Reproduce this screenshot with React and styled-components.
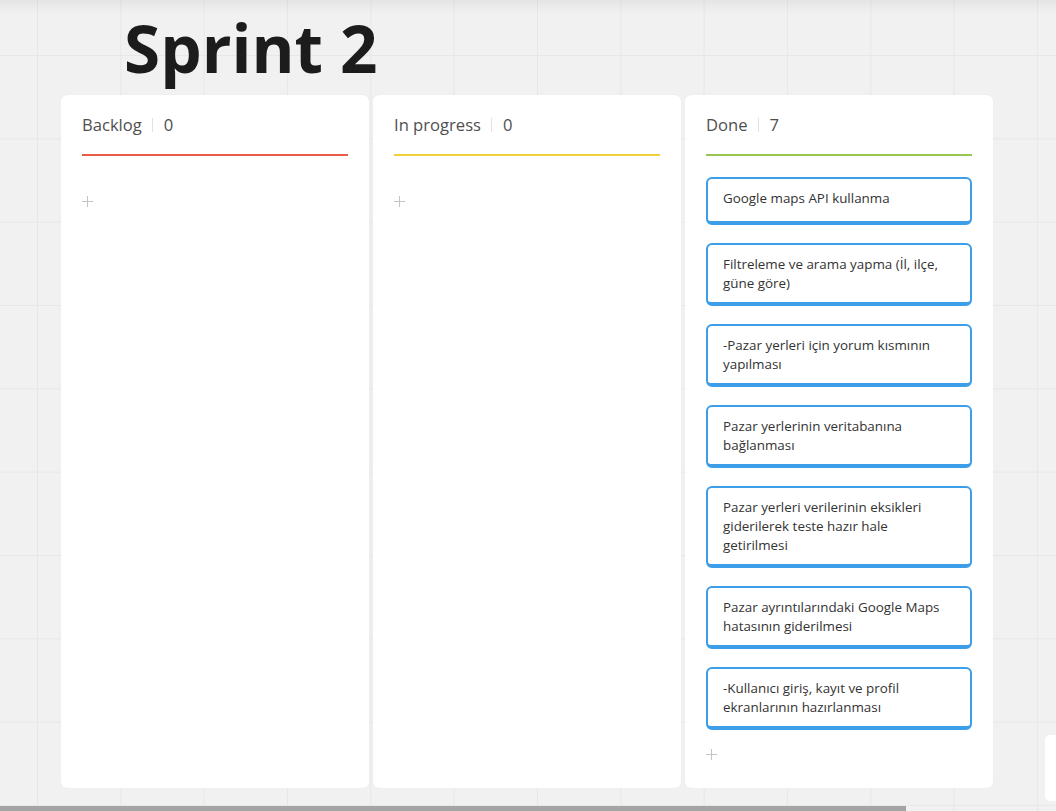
import React from 'react'
import styled, {createGlobalStyle} from 'styled-components'

const GlobalStyle = createGlobalStyle`
  html, body {
    margin: 0;
    padding: 0;
  }
  body {
    font-family: 'Open Sans', 'Noto Sans', sans-serif;
    background-color: #f1f1f1;
    background-image:
      linear-gradient(180deg, rgba(0, 0, 0, 0.05) 0px, rgba(0, 0, 0, 0) 14px),
      linear-gradient(90deg, #e7e7e7 1px, transparent 1px),
      linear-gradient(180deg, #e7e7e7 1px, transparent 1px);
    background-size: 100% 100%, 83.33px 83.33px, 83.33px 83.33px;
    background-position: 0 0, 37px 0, 0 55px;
    background-repeat: no-repeat, repeat, repeat;
    overflow: hidden;
  }
`

const Page = styled.div`
  position: relative;
  width: 1056px;
  height: 811px;
  overflow: hidden;
`

const Title = styled.h1`
  margin: 0;
  padding: 15px 0 0 124px;
  height: 95px;
  box-sizing: border-box;
  font-size: 65.6px;
  line-height: 66px;
  font-weight: 700;
  color: #1c1c1c;
`

const Board = styled.div`
  display: flex;
  gap: 4px;
  padding-left: 61px;
`

const Column = styled.section`
  width: 308px;
  height: 693px;
  box-sizing: border-box;
  padding: 0 21px;
  background: #fff;
  border-radius: 6px;
  box-shadow: 0 0 1px rgba(0, 0, 0, 0.08);
`

const Header = styled.header`
  display: flex;
  align-items: center;
  padding: 19px 0 18px;
  font-size: 16.6px;
  line-height: 22px;
  color: #4f4f4f;
  border-bottom: 2px solid ${p => p.accent};
`

const Divider = styled.span`
  width: 1px;
  height: 14px;
  margin: 0 11px 0 10px;
  background: #e2e2e2;
`

const List = styled.div`
  display: flex;
  flex-direction: column;
  gap: 18px;
  padding-top: 21px;
`

const Card = styled.div`
  box-sizing: border-box;
  min-height: 48px;
  padding: 9.5px 17px 9.5px 15px;
  border: 2px solid #3c9de9;
  border-bottom-width: 4px;
  border-radius: 6px;
  font-size: 13.4px;
  line-height: 19px;
  color: #333;
`

const Plus = styled.div`
  margin-top: 17px;
  width: 12px;
  height: 14px;
  display: flex;
  align-items: center;
`

const Scrollbar = styled.div`
  position: absolute;
  left: 0;
  bottom: 0;
  width: 906px;
  height: 5px;
  background: #a4a4a4;
`

const EdgeCard = styled.div`
  position: absolute;
  left: 1045px;
  top: 735px;
  width: 30px;
  height: 66px;
  background: #fff;
  border-radius: 5px;
`

const columns = [
  {title: 'Backlog', accent: '#e85b44', cards: []},
  {title: 'In progress', accent: '#f1d13a', cards: []},
  {
    title: 'Done',
    accent: '#97c653',
    cards: [
      'Google maps API kullanma',
      'Filtreleme ve arama yapma (İl, ilçe, güne göre)',
      '-Pazar yerleri için yorum kısmının yapılması',
      'Pazar yerlerinin veritabanına bağlanması',
      'Pazar yerleri verilerinin eksikleri giderilerek teste hazır hale getirilmesi',
      'Pazar ayrıntılarındaki Google Maps hatasının giderilmesi',
      '-Kullanıcı giriş, kayıt ve profil ekranlarının hazırlanması'
    ]
  }
]

const PlusIcon = () => (
  <svg width='11' height='11' viewBox='0 0 11 11'>
    <path d='M5.5 0V11M0 5.5H11' stroke='#c4c4c4' strokeWidth='1' />
  </svg>
)

export default function App () {
  return (
    <Page>
      <GlobalStyle />
      <Title>Sprint 2</Title>
      <Board>
        {columns.map(col => (
          <Column key={col.title}>
            <Header accent={col.accent}>
              {col.title}
              <Divider />
              {col.cards.length}
            </Header>
            <List>
              {col.cards.map(text => (
                <Card key={text}>{text}</Card>
              ))}
            </List>
            <Plus>
              <PlusIcon />
            </Plus>
          </Column>
        ))}
      </Board>
      <EdgeCard />
      <Scrollbar />
    </Page>
  )
}
